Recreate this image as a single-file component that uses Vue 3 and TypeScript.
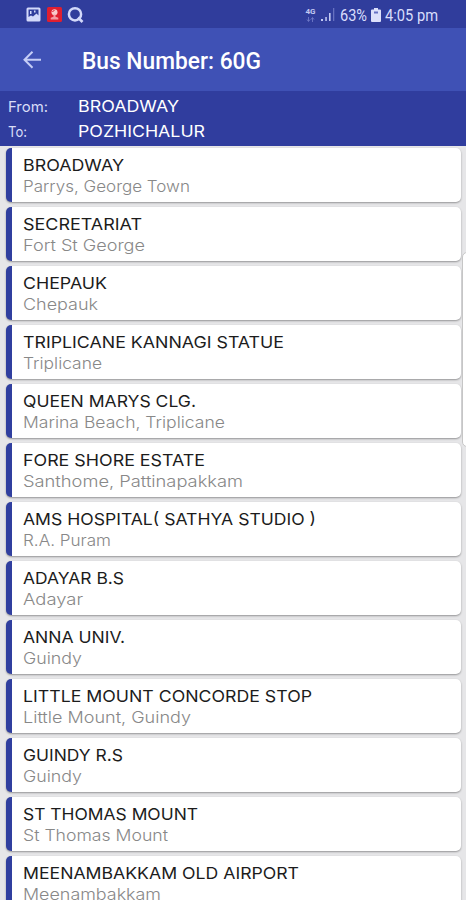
<script setup lang="ts">
interface Stop {
  name: string
  area: string
  nameWidth: number
  areaWidth: number
}

const stops: Stop[] = [
  { name: 'BROADWAY', area: 'Parrys, George Town', nameWidth: 101, areaWidth: 167 },
  { name: 'SECRETARIAT', area: 'Fort St George', nameWidth: 119, areaWidth: 122 },
  { name: 'CHEPAUK', area: 'Chepauk', nameWidth: 84, areaWidth: 75 },
  { name: 'TRIPLICANE KANNAGI STATUE', area: 'Triplicane', nameWidth: 261, areaWidth: 79 },
  { name: 'QUEEN MARYS CLG.', area: 'Marina Beach, Triplicane', nameWidth: 173, areaWidth: 202 },
  { name: 'FORE SHORE ESTATE', area: 'Santhome, Pattinapakkam', nameWidth: 182, areaWidth: 220 },
  { name: 'AMS HOSPITAL( SATHYA STUDIO )', area: 'R.A. Puram', nameWidth: 293, areaWidth: 88 },
  { name: 'ADAYAR B.S', area: 'Adayar', nameWidth: 101, areaWidth: 60 },
  { name: 'ANNA UNIV.', area: 'Guindy', nameWidth: 102, areaWidth: 59 },
  { name: 'LITTLE MOUNT CONCORDE STOP', area: 'Little Mount, Guindy', nameWidth: 289, areaWidth: 168 },
  { name: 'GUINDY R.S', area: 'Guindy', nameWidth: 100, areaWidth: 59 },
  { name: 'ST THOMAS MOUNT', area: 'St Thomas Mount', nameWidth: 175, areaWidth: 145 },
  { name: 'MEENAMBAKKAM OLD AIRPORT', area: 'Meenambakkam', nameWidth: 276, areaWidth: 138 },
]
</script>

<template>
  <main class="screen">
    <header class="status">
      <div class="notifications">
        <svg width="15" height="15" viewBox="0 0 15 15">
          <path fill="#d3d9fa" fill-rule="evenodd" d="M2 0.500h11q1.500 0 1.500 1.500v11q0 1.500-1.500 1.500H2q-1.500 0-1.500-1.500V2q0-1.500 1.500-1.500zM2.500 2.500v7.500l2.500-1.500 2 1 3.500-3 2 2V2.500z" />
          <path fill="#d3d9fa" d="M4 4h1.500v3H4zM8 3.500h1.500v2H8z" />
        </svg>
        <svg width="15" height="15" viewBox="0 0 15 15">
          <rect width="15" height="15" rx="1.5" fill="#e01f30" />
          <circle cx="7.500" cy="5.300" r="3" fill="#f9c9cb" />
          <path d="M5.500 5q.5-1.500 2-1.500" stroke="#e01f30" fill="none" />
          <path d="M6.500 7.500h2v2.200l2.800 1v1.800H3.700v-1.800l2.800-1z" fill="#f49ca3" />
        </svg>
        <svg width="18" height="17" viewBox="0 0 18 17">
          <circle cx="8" cy="7.300" r="6.1" fill="none" stroke="#d3d9fa" stroke-width="2.5" />
          <path d="M11 10.500l4.500 4.500" stroke="#d3d9fa" stroke-width="2.6" />
        </svg>
      </div>
      <div class="system">
        <div class="network"><span>4G</span><svg width="9" height="5" viewBox="0 0 9 5"><path d="M2.5 0v4M1 2.5l1.5 2L4 2.500M6.500 5V1M5 2.500l1.500-2L8 2.500" fill="none" stroke="#7780cb" stroke-width=".8" /></svg></div>
        <svg class="signal" width="14" height="14" viewBox="0 0 14 14">
          <path d="M0 11h2v2H0zM4.300 9h1.500v4H4.300zM8 5h1.600v8H8z" fill="#c3caf3" />
          <path d="M12 0h1.300v13H12z" fill="#6670c0" />
        </svg>
        <svg class="percent" width="28" height="22"><text x="0" y="16" textLength="27" lengthAdjust="spacingAndGlyphs">63%</text></svg>
        <svg class="battery" width="10" height="14" viewBox="0 0 10 14">
          <path d="M3 0h4v1.500h2q1 0 1 1V13q0 1-1 1H1q-1 0-1-1V2.500q0-1 1-1h2z" fill="#dce0fb" />
          <path d="M3 3.500h4v2H3z" fill="#6671c3" />
        </svg>
        <svg class="clock" width="54" height="22"><text x="0" y="16" textLength="53" lengthAdjust="spacingAndGlyphs">4:05 pm</text></svg>
      </div>
    </header>

    <nav class="toolbar">
      <svg class="back" width="20" height="20" viewBox="0 0 20 20">
        <path d="M10.500 1.800L2.500 9.800l8 8M2.500 9.800H19" fill="none" stroke="#c5cdf6" stroke-width="2" />
      </svg>
      <svg class="heading" width="184" height="30"><text x="0" y="23.500" textLength="179" lengthAdjust="spacingAndGlyphs">Bus Number: 60G</text></svg>
    </nav>

    <section class="route">
      <div class="route-row">
        <svg class="label" width="70" height="25"><text x="0" y="18" textLength="40" lengthAdjust="spacingAndGlyphs">From:</text></svg>
        <svg class="place" width="150" height="25"><text x="0" y="18" textLength="101" lengthAdjust="spacingAndGlyphs">BROADWAY</text></svg>
      </div>
      <div class="route-row">
        <svg class="label" width="70" height="25"><text x="0" y="18.300" textLength="19" lengthAdjust="spacingAndGlyphs">To:</text></svg>
        <svg class="place" width="150" height="25"><text x="0" y="18.300" textLength="127" lengthAdjust="spacingAndGlyphs">POZHICHALUR</text></svg>
      </div>
    </section>

    <section class="stops">
      <article v-for="stop in stops" :key="stop.name" class="stop">
        <svg class="stop-text" width="330" height="53">
          <text class="name" x="0" y="22.500" :textLength="stop.nameWidth" lengthAdjust="spacingAndGlyphs">{{ stop.name }}</text>
          <text class="area" x="0" y="43.500" :textLength="stop.areaWidth" lengthAdjust="spacingAndGlyphs">{{ stop.area }}</text>
        </svg>
      </article>
    </section>
    <div class="edge-handle"></div>
  </main>
</template>

<style>
body {
  margin: 0;
  overflow: hidden;
}
</style>

<style scoped>
.screen {
  position: relative;
  width: 466px;
  height: 900px;
  overflow: hidden;
  display: flex;
  flex-direction: column;
  background: #e6e6e8;
  font-family: Inter, 'Liberation Sans', sans-serif;
}
svg {
  display: block;
  flex: none;
  overflow: visible;
}
.status {
  flex: none;
  height: 28px;
  box-sizing: border-box;
  padding: 0 27px 0 26px;
  display: flex;
  justify-content: space-between;
  background: #303d9c;
}
.notifications {
  display: flex;
  gap: 5.500px;
  padding-top: 7px;
}
.system {
  display: flex;
  padding-top: 5px;
  font-family: Roboto, sans-serif;
  font-size: 16px;
  fill: #d9ddfb;
}
.network {
  width: 11px;
  margin: 3px 5px 0 0;
  display: flex;
  flex-direction: column;
  align-items: center;
  gap: 2px;
  color: #c3caf3;
  font-size: 8px;
  font-weight: 700;
  line-height: 7px;
}
.signal {
  margin: 3px 5px 0 0;
}
.percent {
  margin-right: 3px;
}
.battery {
  margin: 3px 4px 0 0;
}
.toolbar {
  flex: none;
  height: 63px;
  display: flex;
  align-items: center;
  padding-left: 22px;
  background: #3f51b5;
}
.heading {
  margin-left: 40px;
  font-family: Roboto, sans-serif;
  font-size: 23.500px;
  font-weight: 500;
  fill: #fff;
}
.route {
  flex: none;
  height: 55px;
  padding: 3px 0 0 8px;
  box-sizing: border-box;
  background: #303d9e;
}
.route-row {
  display: flex;
  height: 25px;
}
.label {
  font-size: 14.500px;
  font-weight: 400;
  fill: #d9ddf8;
}
.place {
  font-size: 16px;
  font-weight: 400;
  fill: #fff;
}
.stops {
  display: flex;
  flex-direction: column;
  gap: 5.500px;
  padding: 2px 5px 0 6px;
}
.stop {
  flex: none;
  height: 53.500px;
  box-sizing: border-box;
  padding-left: 11px;
  border-left: 6px solid #303f9f;
  border-radius: 5px;
  background: #fff;
  box-shadow: 0 1px 2px #0000005c;
}
.name {
  font-size: 16.500px;
  font-weight: 400;
  fill: #1c1c1c;
}
.area {
  font-size: 16px;
  font-weight: 300;
  fill: #888;
}
.edge-handle {
  position: absolute;
  left: 462px;
  top: 252px;
  width: 10px;
  height: 195px;
  box-sizing: border-box;
  border: 1px solid #c6c6c6;
  border-radius: 5px;
  background: #fff;
}
</style>
